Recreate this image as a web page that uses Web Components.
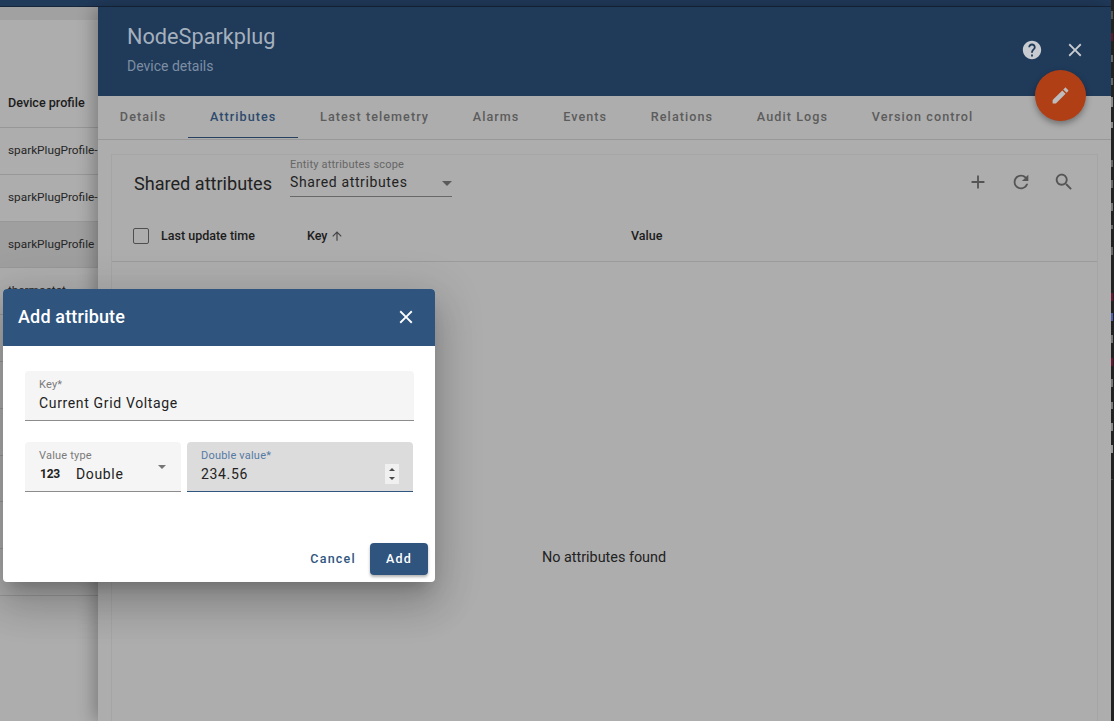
<!DOCTYPE html>
<html>
<head>
<meta charset="utf-8">
<title>Add attribute</title>
<style>
  html, body { margin: 0; height: 100%; overflow: hidden; background: #adadad; }
  body { font-family: Roboto, "Liberation Sans", sans-serif; }
</style>
</head>
<body>
<app-page></app-page>

<script>
const ICONS = {
  help: 'M12 2C6.48 2 2 6.48 2 12s4.48 10 10 10 10-4.48 10-10S17.52 2 12 2zm1 17h-2v-2h2v2zm2.07-7.75l-.9.92C13.45 12.9 13 13.5 13 15h-2v-.5c0-1.1.45-2.1 1.17-2.83l1.24-1.26c.37-.36.59-.86.59-1.41 0-1.1-.9-2-2-2s-2 .9-2 2H8c0-2.21 1.79-4 4-4s4 1.79 4 4c0 .88-.36 1.68-.93 2.25z',
  close: 'M19 6.41L17.59 5 12 10.59 6.41 5 5 6.41 10.59 12 5 17.59 6.41 19 12 13.41 17.59 19 19 17.59 13.41 12z',
  edit: 'M3 17.25V21h3.75L17.81 9.94l-3.75-3.75L3 17.25zM20.71 7.04c.39-.39.39-1.02 0-1.41l-2.34-2.34c-.39-.39-1.02-.39-1.41 0l-1.83 1.83 3.75 3.75 1.83-1.83z',
  add: 'M19 13h-6v6h-2v-6H5v-2h6V5h2v6h6v2z',
  refresh: 'M17.65 6.35C16.2 4.9 14.21 4 12 4c-4.42 0-7.99 3.58-7.99 8s3.57 8 7.99 8c3.73 0 6.84-2.55 7.73-6h-2.08c-.82 2.33-3.04 4-5.65 4-3.31 0-6-2.69-6-6s2.69-6 6-6c1.66 0 3.14.69 4.22 1.78L13 11h7V4l-2.35 2.35z',
  search: 'M15.5 14h-.79l-.28-.27C15.41 12.59 16 11.11 16 9.5 16 5.91 13.09 3 9.5 3S3 5.91 3 9.5 5.91 16 9.5 16c1.61 0 3.09-.59 4.23-1.57l.27.28v.79l5 4.99L20.49 19l-4.99-5zm-6 0C7.01 14 5 11.99 5 9.5S7.01 5 9.5 5 14 7.01 14 9.5 11.99 14 9.5 14z',
  up: 'M4 12l1.41 1.41L11 7.83V20h2V7.83l5.58 5.59L20 12l-8-8-8 8z'
}

class UiIcon extends HTMLElement { // svg icon, name + size attributes
  connectedCallback() {
    const size = this.getAttribute('size') || 22
    this.attachShadow({ mode: 'open' })
    this.shadowRoot.innerHTML = `
      <style>
        :host { display: inline-flex; flex: none; width: ${size}px; height: ${size}px; }
        svg { width: 100%; height: 100%; fill: currentColor; display: block; }
      </style>
      <svg viewBox="0 0 24 24"><path d="${ICONS[this.getAttribute('name')]}"/></svg>`
  }
}

class DeviceList extends HTMLElement { // table left behind the details panel
  constructor() {
    super()
    this.attachShadow({ mode: 'open' })
    const rows = ['sparkPlugProfile-1', 'sparkPlugProfile-2', 'sparkPlugProfile', 'thermostat', '', '', '', '', '', '']
    this.shadowRoot.innerHTML = `
      <style>
        :host { display: block; width: 98px; flex: none; overflow: hidden; background: #adadad; color: #1c1c1c; font-size: 12px; }
        .strip { height: 13px; background: #a1a1a1; }
        .head { height: 108px; box-sizing: border-box; padding: 75px 0 0 8px; font-size: 12.6px; font-weight: 500; line-height: 16px; white-space: nowrap; border-bottom: 1px solid #979797; }
        .row { height: 46.8px; box-sizing: border-box; border-bottom: 1px solid #989898; padding-left: 8px; line-height: 45.5px; white-space: nowrap; font-size: 11.8px; color: #262626; }
        .row.sel { background: #9f9f9f; }
      </style>
      <div class="strip"></div>
      <div class="head">Device profile</div>
      ${rows.map((r, i) => `<div class="row ${i == 2 ? 'sel' : ''}">${r}</div>`).join('')}`
  }
}

class TabBar extends HTMLElement { // tabs under the panel header
  constructor() {
    super()
    this.attachShadow({ mode: 'open' })
    const tabs = ['Details', 'Attributes', 'Latest telemetry', 'Alarms', 'Events', 'Relations', 'Audit Logs', 'Version control']
    this.shadowRoot.innerHTML = `
      <style>
        :host { display: flex; flex: none; height: 44px; box-sizing: border-box; border-bottom: 1px solid #989898; }
        .tab { padding: 0 21.85px; line-height: 41px; font-size: 12.6px; font-weight: 500; letter-spacing: 1.07px; color: #5c5c5c; white-space: nowrap; box-sizing: border-box; height: 42px; }
        .tab:first-child { padding-left: 21.4px; }
        .tab.on { color: #2e4a6c; border-bottom: 1px solid #27405f; }
      </style>
      ${tabs.map(t => `<div class="tab ${t == 'Attributes' ? 'on' : ''}">${t}</div>`).join('')}`
  }
}

class AttrCard extends HTMLElement { // shared attributes card with empty table
  constructor() {
    super()
    this.attachShadow({ mode: 'open' })
    this.shadowRoot.innerHTML = `
      <style>
        :host { display: block; margin: 14px 13px 0 13px; background: #adadad; border: 1px solid #a5a5a5; border-bottom: 0; color: #1c1c1c; }
        .bar { display: flex; align-items: center; height: 57px; padding-left: 22px; }
        .title { font-size: 18.1px; line-height: 24px; width: 156px; flex: none; margin-top: 1px; color: #222; white-space: nowrap; }
        .scope { width: 162px; flex: none; height: 38px; box-sizing: border-box; border-bottom: 1px solid #686868; position: relative; align-self: flex-start; margin-top: 4px; }
        .scope small { display: block; font-size: 11px; line-height: 12px; color: #666; letter-spacing: .2px; white-space: nowrap; }
        .scope span { display: block; font-size: 14px; line-height: 21px; letter-spacing: .63px; color: #222; white-space: nowrap; margin-top: 1px; }
        .arrow { position: absolute; right: 0; top: 22px; width: 0; height: 0; border: 5px solid transparent; border-top-color: #5a5a5a; border-bottom: 0; }
        .icons { margin: -3px 0 0 auto; display: flex; gap: 21px; padding-right: 22px; color: #555; }
        .thead { display: flex; align-items: center; height: 50px; box-sizing: border-box; padding-bottom: 1px; border-bottom: 1px solid #9b9b9b; font-size: 12.5px; font-weight: 500; line-height: 16px; white-space: nowrap; }
        .check { width: 14px; height: 14px; border: 1px solid #4f4f4f; border-radius: 2px; margin: 0 12px 0 21px; flex: none; }
        .c1 { width: 146px; flex: none; }
        .c2 { width: 324px; flex: none; display: flex; align-items: center; gap: 3px; }
        .c2 ui-icon { color: #444; }
        .empty { height: 590px; display: flex; align-items: center; justify-content: center; font-size: 14.4px; color: #222; padding-right: 1px; }
      </style>
      <div class="bar">
        <div class="title">Shared attributes</div>
        <div class="scope">
          <small>Entity attributes scope</small>
          <span>Shared attributes</span>
          <i class="arrow"></i>
        </div>
        <div class="icons">
          <ui-icon name="add"></ui-icon>
          <ui-icon name="refresh"></ui-icon>
          <ui-icon name="search"></ui-icon>
        </div>
      </div>
      <div class="thead">
        <div class="check"></div>
        <div class="c1">Last update time</div>
        <div class="c2">Key <ui-icon name="up" size="14"></ui-icon></div>
        <div>Value</div>
      </div>
      <div class="empty">No attributes found</div>`
  }
}

class DevicePanel extends HTMLElement { // details panel sliding over the list
  constructor() {
    super()
    this.attachShadow({ mode: 'open' })
    this.shadowRoot.innerHTML = `
      <style>
        :host { display: flex; flex-direction: column; flex: 1; min-width: 0; position: relative; background: #adadad; box-shadow: -4px 0 16px rgba(0,0,0,.28); }
        .head { flex: none; height: 89px; background: #203a5a; position: relative; padding-left: 29px; box-sizing: border-box; }
        h1 { margin: 0; padding-top: 16px; font-size: 21.7px; line-height: 28px; font-weight: 400; color: #a5b0bd; }
        p { margin: 6px 0 0; font-size: 14px; line-height: 18px; color: #7d8ea3; }
        .acts { position: absolute; right: 25px; top: 32px; display: flex; gap: 21px; color: #c8cbd0; }
        .fab { position: absolute; right: 25px; top: 63px; width: 51px; height: 51px; border-radius: 50%; background: #b03f15; color: #bdbdbd; display: flex; align-items: center; justify-content: center; box-shadow: 0 3px 6px rgba(0,0,0,.35); z-index: 2; }
        .body { flex: 1; min-height: 0; overflow: hidden; }
      </style>
      <div class="head">
        <h1>NodeSparkplug</h1>
        <p>Device details</p>
        <div class="acts">
          <ui-icon name="help"></ui-icon>
          <ui-icon name="close"></ui-icon>
        </div>
        <div class="fab"><ui-icon name="edit" size="21"></ui-icon></div>
      </div>
      <tab-bar></tab-bar>
      <div class="body"><attr-card></attr-card></div>`
  }
}

class FormField extends HTMLElement { // filled field: label attribute, value in the slot
  constructor() {
    super()
    this.attachShadow({ mode: 'open' })
  }
  connectedCallback() {
    this.shadowRoot.innerHTML = `
      <style>
        :host { display: block; height: 50px; box-sizing: border-box; background: #f5f5f5; border-radius: 4px 4px 0 0; border-bottom: 1px solid #8c8c8c; padding: 7px 14px 0; position: relative; color: #222; }
        :host([focused]) { background: #dcdcdc; border-bottom-color: #305680; }
        label { display: block; font-size: 11px; line-height: 13px; letter-spacing: .2px; color: #7b7b7b; white-space: nowrap; }
        :host([focused]) label { color: #557aa3; }
        .val { display: flex; align-items: center; font-size: 14px; line-height: 20px; letter-spacing: .65px; margin-top: 2px; white-space: nowrap; }
      </style>
      <label>${this.getAttribute('label')}</label>
      <div class="val"><slot></slot></div>`
  }
}

class AddDialog extends HTMLElement { // modal over everything
  constructor() {
    super()
    this.attachShadow({ mode: 'open' })
    this.shadowRoot.innerHTML = `
      <style>
        :host { display: block; position: absolute; left: 3px; top: 289px; width: 432px; height: 293px; background: #fff; border-radius: 4px; color: #222; overflow: visible; box-shadow: 0 11px 15px -7px rgba(0,0,0,.2), 0 24px 38px 3px rgba(0,0,0,.14), 0 9px 46px 8px rgba(0,0,0,.12); }
        .head { height: 57px; background: #2f557f; border-radius: 4px 4px 0 0; display: flex; align-items: center; justify-content: space-between; padding: 0 18px 2px 15px; box-sizing: border-box; color: #fff; }
        .head b { font-size: 18px; font-weight: 500; letter-spacing: .15px; }
        .form { padding: 25px 21px 0 22px; }
        .row { display: flex; gap: 6px; margin-top: 21px; margin-right: 1px; }
        .type { width: 156px; flex: none; position: relative; }
        .dbl { flex: 1; position: relative; }
        .num { font-size: 12px; font-weight: 700; letter-spacing: -.2px; width: 37px; flex: none; padding-left: 1px; box-sizing: border-box; }
        .caret { position: absolute; right: 15px; top: 23px; width: 0; height: 0; border: 4.5px solid transparent; border-top-color: #757575; border-bottom: 0; }
        .spin { position: absolute; right: 14px; top: 22px; width: 14px; height: 20px; background: #f0f0f0; display: flex; flex-direction: column; align-items: center; justify-content: center; gap: 5.5px; }
        .spin i { width: 0; height: 0; border: 3.5px solid transparent; }
        .spin .u { border-bottom-color: #4b4b4b; border-top: 0; }
        .spin .d { border-top-color: #4b4b4b; border-bottom: 0; }
        .foot { display: flex; justify-content: flex-end; align-items: center; gap: 14px; padding: 51px 7px 0 0; }
        .btn { font-size: 12.5px; font-weight: 500; letter-spacing: 1.25px; white-space: nowrap; }
        .cancel { color: #305680; margin-top: -2px; }
        .ok { width: 58px; height: 32px; box-sizing: border-box; padding-bottom: 2px; display: flex; align-items: center; justify-content: center; background: #2f557f; color: #fff; border-radius: 4px; box-shadow: 0 2px 3px rgba(0,0,0,.3); }
      </style>
      <div class="head">
        <b>Add attribute</b>
        <ui-icon name="close"></ui-icon>
      </div>
      <div class="form">
        <form-field label="Key*">Current Grid Voltage</form-field>
        <div class="row">
          <form-field class="type" label="Value type"><span class="num">123</span>Double<i class="caret"></i></form-field>
          <form-field class="dbl" label="Double value*" focused>234.56<div class="spin"><i class="u"></i><i class="d"></i></div></form-field>
        </div>
      </div>
      <div class="foot">
        <div class="btn cancel">Cancel</div>
        <div class="btn ok">Add</div>
      </div>`
  }
}

class AppPage extends HTMLElement { // whole window
  constructor() {
    super()
    this.attachShadow({ mode: 'open' })
    const ticks = [[11, 8, '#555'], [33, 8, '#5b1a2a'], [55, 7, '#666'], [78, 7, '#666'], [97, 10, '#8a8a8a'], [122, 6, '#8a8a8a'], [160, 7, '#666'], [180, 8, '#666'], [203, 8, '#777'], [225, 4, '#666'], [247, 8, '#666'], [293, 8, '#6b1530'], [313, 8, '#4a5fa8'], [335, 8, '#777'], [358, 8, '#6b1530'], [379, 8, '#777'], [402, 7, '#777'], [423, 8, '#888'], [445, 8, '#999'], [479, 1, '#444']]
    let last = 0
    const bits = ticks.map(t => {
      const s = `<i style="margin-top:${t[0] - last}px;height:${t[1]}px;background:${t[2]}"></i>`
      last = t[0] + t[1]
      return s
    }).join('')
    this.shadowRoot.innerHTML = `
      <style>
        :host { display: flex; height: 721px; width: 1114px; overflow: hidden; position: relative; }
        .main { flex: 1; display: flex; flex-direction: column; min-width: 0; }
        .top { height: 6px; flex: none; background: #203a5a; border-bottom: 1px solid #16263b; }
        .work { flex: 1; display: flex; min-height: 0; }
        .edge { width: 3px; flex: none; background: #222; display: flex; flex-direction: column; align-items: flex-start; position: relative; z-index: 3; }
        .edge i { display: block; width: 2px; flex: none; }
      </style>
      <div class="main">
        <div class="top"></div>
        <div class="work">
          <device-list></device-list>
          <device-panel></device-panel>
        </div>
      </div>
      <div class="edge">${bits}</div>
      <add-dialog></add-dialog>`
  }
}

customElements.define('ui-icon', UiIcon)
customElements.define('device-list', DeviceList)
customElements.define('tab-bar', TabBar)
customElements.define('attr-card', AttrCard)
customElements.define('device-panel', DevicePanel)
customElements.define('form-field', FormField)
customElements.define('add-dialog', AddDialog)
customElements.define('app-page', AppPage)
</script>
</body>
</html>
